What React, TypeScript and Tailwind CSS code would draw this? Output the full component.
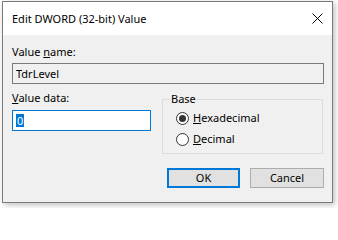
import React from "react";

function Radio({ checked }: { checked?: boolean }) {
  return (
    <span className="flex h-[13px] w-[13px] shrink-0 items-center justify-center rounded-full border border-[#333333] bg-white">
      {checked && <span className="h-[7px] w-[7px] rounded-full bg-[#333333]" />}
    </span>
  );
}

export default function App() {
  return (
    <div
      className="h-[208px] w-[338px] bg-white pl-[2px] pt-[1px] text-[11px] text-black"
      style={{ fontFamily: '"Noto Sans", "Liberation Sans", sans-serif' }}
    >
      <div className="flex h-[202px] w-[331px] flex-col border border-[#7a7a7a] shadow-[2px_2px_6px_rgba(0,0,0,0.25)]">
        <div className="flex h-[33px] items-center justify-between bg-white pl-[9px] pr-[9px]">
          <span className="leading-[16px]">Edit DWORD (32-bit) Value</span>
          <svg width="11" height="11" viewBox="0 0 11 11">
            <path d="M0.5 0.5 L10.5 10.5 M10.5 0.5 L0.5 10.5" stroke="#000" strokeWidth="1" fill="none" />
          </svg>
        </div>
        <div className="flex flex-1 flex-col bg-[#f0f0f0] pl-[9px] pt-[9px]">
          <div className="h-[16px] leading-[16px]">
            Value <u>n</u>ame:
          </div>
          <div className="mt-[3px] flex h-[21px] w-[312px] items-center border border-[#7a7a7a] bg-[#f0f0f0] pl-[3px] leading-[16px]">
            TdrLevel
          </div>
          <div className="mt-[6px] flex gap-[11px]">
            <div className="flex w-[139px] flex-col">
              <div className="h-[16px] leading-[16px]">
                <u>V</u>alue data:
              </div>
              <div className="mt-[4px] flex h-[21px] w-[139px] items-center border border-[#0078d7] bg-white pl-[3px]">
                <span className="bg-[#0078d7] px-[1px] leading-[13px] text-white">0</span>
              </div>
            </div>
            <div className="relative mt-[9px] flex h-[55px] w-[161px] flex-col gap-[5px] border border-[#dcdcdc] pl-[13px] pt-[10px]">
              <span className="absolute left-[7px] top-[-9px] bg-[#f0f0f0] px-[1px] leading-[16px]">Base</span>
              <div className="flex items-center gap-[4px] leading-[16px]">
                <Radio checked />
                <span>
                  <u>H</u>exadecimal
                </span>
              </div>
              <div className="flex items-center gap-[4px] leading-[16px]">
                <Radio />
                <span>
                  <u>D</u>ecimal
                </span>
              </div>
            </div>
          </div>
          <div className="mt-[14px] flex justify-end gap-[10px] pr-[8px]">
            <button className="flex h-[20px] w-[73px] items-center justify-center border-2 border-[#0078d7] bg-[#e1e1e1] leading-[16px]">
              OK
            </button>
            <button className="flex h-[20px] w-[74px] items-center justify-center border border-[#adadad] bg-[#e1e1e1] leading-[16px]">
              Cancel
            </button>
          </div>
        </div>
      </div>
    </div>
  );
}
